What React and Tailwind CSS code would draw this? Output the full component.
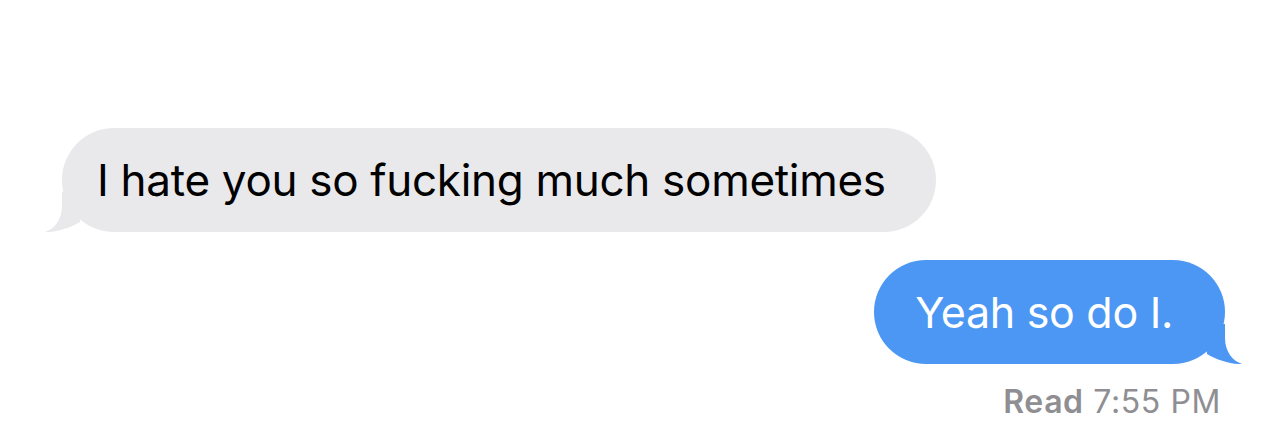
import React from 'react';

// Little curled tail that sits at the bottom corner of a bubble
const Tail = ({ color, side }) => (
  <svg
    width="40"
    height="40"
    viewBox="0 0 40 40"
    className={
      side === 'left'
        ? 'absolute bottom-0 -left-[20px]'
        : 'absolute bottom-0 -right-[20px] -scale-x-100'
    }
  >
    <path
      d="M20 0 L20 14 C20 28 12 37 3 40 C14 40.5 28 36 38 30 L40 0 Z"
      fill={color}
    />
  </svg>
);

const Bubble = ({ children, side }) => {
  const incoming = side === 'left';
  return (
    <div
      className={`relative h-[104px] rounded-[52px] flex items-center ${
        incoming
          ? 'bg-[#e9e9eb] text-black pl-[35px] pr-[50px]'
          : 'bg-[#4b97f3] text-white pl-[41px] pr-[52px]'
      }`}
    >
      <Tail color={incoming ? '#e9e9eb' : '#4b97f3'} side={side} />
      <span
        className={`relative leading-none tracking-[-0.3px] ${
          incoming ? 'text-[44px]' : 'text-[43px]'
        }`}
      >
        {children}
      </span>
    </div>
  );
};

export default function App() {
  return (
    <div
      className="w-full h-[427px] bg-white flex flex-col pt-[128px]"
      style={{ fontFamily: 'Inter, "Noto Sans", sans-serif' }}
    >
      <div className="self-start ml-[62px]">
        <Bubble side="left">I hate you so fucking much sometimes</Bubble>
      </div>

      <div className="self-end mr-[58px] mt-[28px]">
        <Bubble side="right">Yeah so do I.</Bubble>
      </div>

      <div className="self-end mr-[62px] mt-[22px] text-[32px] leading-none tracking-[0.6px] text-[#8e8e93]">
        <span className="font-semibold">Read</span> 7:55 PM
      </div>
    </div>
  );
}
